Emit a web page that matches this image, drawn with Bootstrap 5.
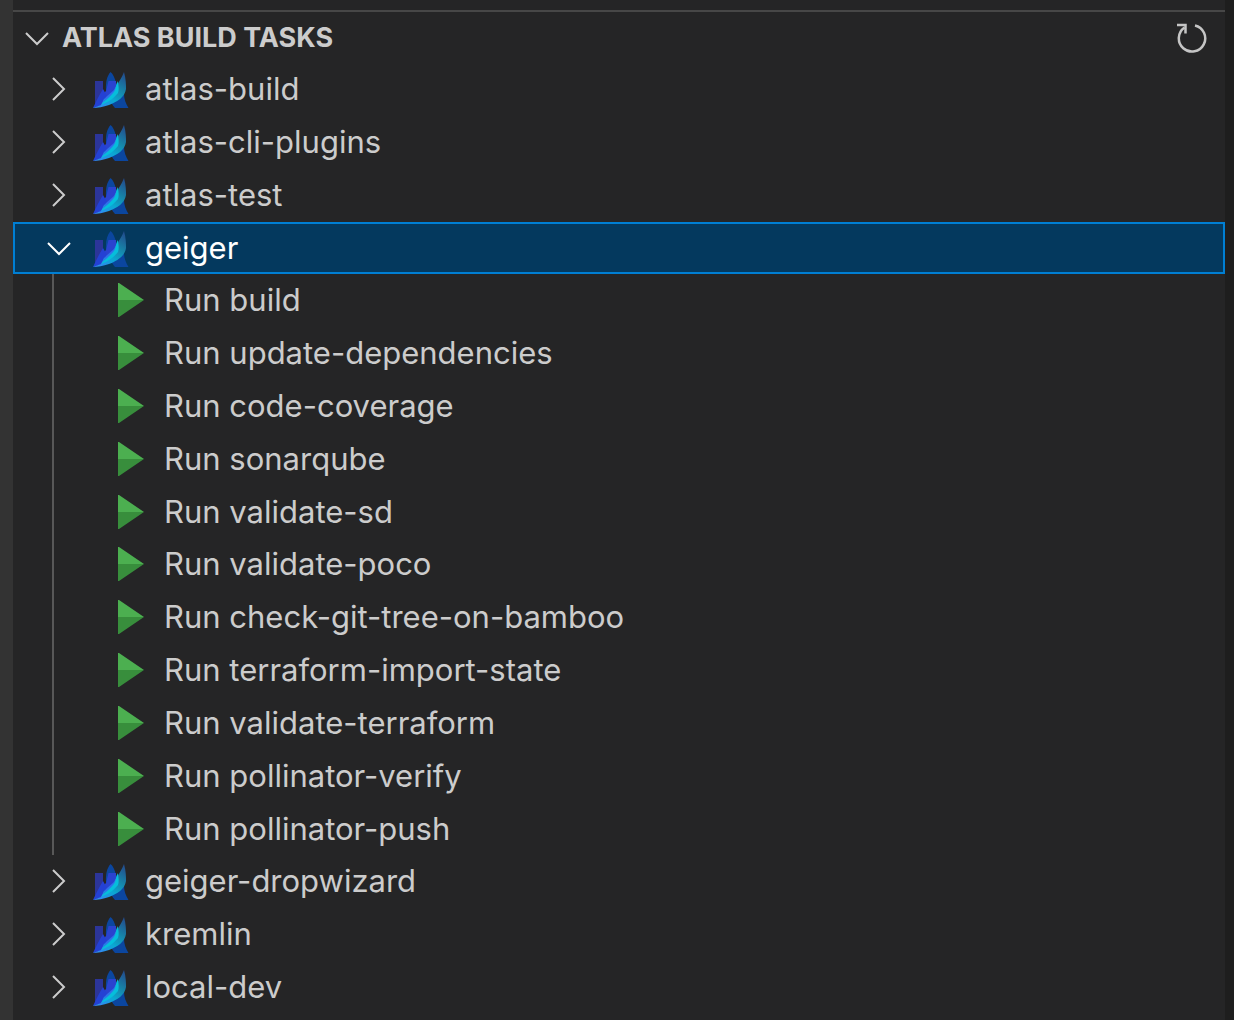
<!DOCTYPE html>
<html lang="en">
<head>
<meta charset="utf-8">
<meta name="viewport" content="width=device-width, initial-scale=1">
<title>Atlas Build Tasks</title>
<link href="https://cdn.jsdelivr.net/npm/bootstrap@5.3.0/dist/css/bootstrap.min.css" rel="stylesheet">
<style>
  body { background: #252526; color: #ccc; font-family: Inter, "Liberation Sans", sans-serif; }
  .activity-edge { width: 13px; background: #333; }
  .editor-edge { width: 9px; background: #1e1e1e; }
  .pane { border-top: 2px solid #474747; margin-top: 10px; }
  .pane-title { height: 51px; padding: 0 18px 0 11px; }
  .pane-title h1 { font-size: 27px; line-height: 32px; }
  .plain { background: none; border: 0; padding: 0; color: inherit; text-align: left; }
  .tree-row { height: 53px; padding: 0 0 2px 33px; font-size: 31px; line-height: 40px; }
  .tree-row.selected { height: 52px; padding: 0 0 0 31px; background: #04395e; border: 2px solid #007fd4; color: #fff; }
  .tree-row .logo { margin: 2px 16px 0 21px; }
  .task-list { height: 581px; margin-left: 39px; border-left: 2px solid #585858; }
  .task-row { padding-left: 64px; font-size: 31px; line-height: 40px; }
  .task-row svg { margin-right: 20px; }
  .arrow { fill: none; stroke: currentColor; stroke-width: 2; }
</style>
<script src="https://cdn.jsdelivr.net/npm/bootstrap@5.3.0/dist/js/bootstrap.bundle.min.js"></script>
</head>
<body>
<svg width="0" height="0" class="position-absolute" aria-hidden="true">
  <defs>
    <linearGradient id="sail" x1="0.9" y1="0" x2="0.3" y2="1">
      <stop offset="0" stop-color="#234a8c"/>
      <stop offset=".4" stop-color="#1785a8"/>
      <stop offset=".7" stop-color="#0aa8d2"/>
      <stop offset="1" stop-color="#2f8bf0"/>
    </linearGradient>
    <symbol id="atlas" viewBox="0 0 36 36">
      <path fill="#0b469f" d="M17.500 0C20 2 22 6 23 11L31 22C31 27 33 32 35.500 36H22C19 33 17 28 15 22L13 18C12.500 10 14 4 17.500 0Z"/>
      <path fill="#2c3599" d="M2 9H10V30L5 33L2 32Z"/>
      <path fill="#2a43cf" d="M15.500 9H23V20L14 28L10 22L13 19Z"/>
      <path fill="#2441d4" d="M0 36C3 30 6 23 10 17L14 24L10 33Z"/>
      <path fill="url(#sail)" d="M8 33L11 27L19 22L24.500 12C27 8 29 5 31 0C33 7 33 13 33 17C32 25 24 30 16 33C10 35 5 36 0 36Z"/>
      <path fill="#2f72ea" d="M10 30L13 25L21 18L24 12V21L17 26Z"/>
      <path fill="#06bedb" d="M24.500 9C26 14 26 18 25 21C21 26 16 30 8 33C13 27 20 23 22 18Z"/>
    </symbol>
    <symbol id="closed" viewBox="0 0 26 26"><path class="arrow" d="M7 2L18 13L7 24"/></symbol>
    <symbol id="open" viewBox="0 0 26 26"><path class="arrow" d="M2 8L13 19L24 8"/></symbol>
    <symbol id="play" viewBox="0 0 26 34">
      <path fill="#4caf50" d="M0 0H1L26 17H0Z"/>
      <path fill="#388e3c" d="M0 17H26L1 34H0Z"/>
    </symbol>
  </defs>
</svg>
<div class="d-flex min-vh-100">
  <div class="activity-edge flex-shrink-0"></div>
  <main class="pane flex-grow-1">
    <header class="pane-title d-flex align-items-center justify-content-between">
      <h1 class="m-0 fw-bold">
        <button type="button" class="plain d-flex align-items-center fw-bold" aria-expanded="true">
          <svg class="me-2" width="26" height="26" aria-hidden="true"><use href="#open"/></svg><span class="ps-1">ATLAS BUILD TASKS</span>
        </button>
      </h1>
      <button type="button" class="plain d-flex" aria-label="Refresh">
        <svg width="32" height="32" viewBox="0 0 32 32" fill="none" stroke="#c5c5c5" stroke-width="2.500" aria-hidden="true"><path d="M20 3.500A13.200 13.200 0 1 1 9.500 5.500"/><path d="M2 3H10.500V11.500"/></svg>
      </button>
    </header>
    <ul class="list-unstyled m-0">
      <li><button type="button" class="plain tree-row d-flex align-items-center w-100"><svg width="26" height="26" aria-hidden="true"><use href="#closed"/></svg><svg class="logo" width="36" height="36" aria-hidden="true"><use href="#atlas"/></svg><span>atlas-build</span></button></li>
      <li><button type="button" class="plain tree-row d-flex align-items-center w-100"><svg width="26" height="26" aria-hidden="true"><use href="#closed"/></svg><svg class="logo" width="36" height="36" aria-hidden="true"><use href="#atlas"/></svg><span>atlas-cli-plugins</span></button></li>
      <li><button type="button" class="plain tree-row d-flex align-items-center w-100"><svg width="26" height="26" aria-hidden="true"><use href="#closed"/></svg><svg class="logo" width="36" height="36" aria-hidden="true"><use href="#atlas"/></svg><span>atlas-test</span></button></li>
      <li>
        <button type="button" class="plain tree-row selected d-flex align-items-center w-100" aria-expanded="true"><svg width="26" height="26" aria-hidden="true"><use href="#open"/></svg><svg class="logo" width="36" height="36" aria-hidden="true"><use href="#atlas"/></svg><span>geiger</span></button>
        <ul class="task-list list-unstyled d-flex flex-column">
          <li class="d-flex flex-fill"><button type="button" class="plain task-row d-flex align-items-center w-100"><svg width="26" height="34" aria-hidden="true"><use href="#play"/></svg><span>Run build</span></button></li>
          <li class="d-flex flex-fill"><button type="button" class="plain task-row d-flex align-items-center w-100"><svg width="26" height="34" aria-hidden="true"><use href="#play"/></svg><span>Run update-dependencies</span></button></li>
          <li class="d-flex flex-fill"><button type="button" class="plain task-row d-flex align-items-center w-100"><svg width="26" height="34" aria-hidden="true"><use href="#play"/></svg><span>Run code-coverage</span></button></li>
          <li class="d-flex flex-fill"><button type="button" class="plain task-row d-flex align-items-center w-100"><svg width="26" height="34" aria-hidden="true"><use href="#play"/></svg><span>Run sonarqube</span></button></li>
          <li class="d-flex flex-fill"><button type="button" class="plain task-row d-flex align-items-center w-100"><svg width="26" height="34" aria-hidden="true"><use href="#play"/></svg><span>Run validate-sd</span></button></li>
          <li class="d-flex flex-fill"><button type="button" class="plain task-row d-flex align-items-center w-100"><svg width="26" height="34" aria-hidden="true"><use href="#play"/></svg><span>Run validate-poco</span></button></li>
          <li class="d-flex flex-fill"><button type="button" class="plain task-row d-flex align-items-center w-100"><svg width="26" height="34" aria-hidden="true"><use href="#play"/></svg><span>Run check-git-tree-on-bamboo</span></button></li>
          <li class="d-flex flex-fill"><button type="button" class="plain task-row d-flex align-items-center w-100"><svg width="26" height="34" aria-hidden="true"><use href="#play"/></svg><span>Run terraform-import-state</span></button></li>
          <li class="d-flex flex-fill"><button type="button" class="plain task-row d-flex align-items-center w-100"><svg width="26" height="34" aria-hidden="true"><use href="#play"/></svg><span>Run validate-terraform</span></button></li>
          <li class="d-flex flex-fill"><button type="button" class="plain task-row d-flex align-items-center w-100"><svg width="26" height="34" aria-hidden="true"><use href="#play"/></svg><span>Run pollinator-verify</span></button></li>
          <li class="d-flex flex-fill"><button type="button" class="plain task-row d-flex align-items-center w-100"><svg width="26" height="34" aria-hidden="true"><use href="#play"/></svg><span>Run pollinator-push</span></button></li>
        </ul>
      </li>
      <li><button type="button" class="plain tree-row d-flex align-items-center w-100"><svg width="26" height="26" aria-hidden="true"><use href="#closed"/></svg><svg class="logo" width="36" height="36" aria-hidden="true"><use href="#atlas"/></svg><span>geiger-dropwizard</span></button></li>
      <li><button type="button" class="plain tree-row d-flex align-items-center w-100"><svg width="26" height="26" aria-hidden="true"><use href="#closed"/></svg><svg class="logo" width="36" height="36" aria-hidden="true"><use href="#atlas"/></svg><span>kremlin</span></button></li>
      <li><button type="button" class="plain tree-row d-flex align-items-center w-100"><svg width="26" height="26" aria-hidden="true"><use href="#closed"/></svg><svg class="logo" width="36" height="36" aria-hidden="true"><use href="#atlas"/></svg><span>local-dev</span></button></li>
    </ul>
  </main>
  <div class="editor-edge flex-shrink-0"></div>
</div>
</body>
</html>
